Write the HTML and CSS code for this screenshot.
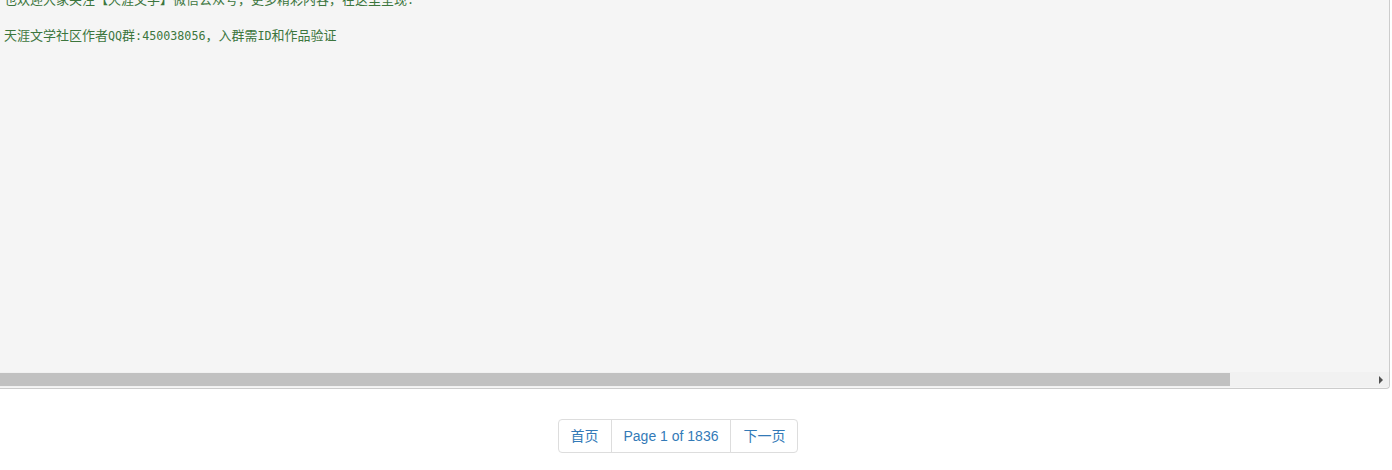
FILE: index.html
```html
<!DOCTYPE html>
<html lang="zh-CN">
<head>
<meta charset="utf-8">
<title>天涯文学</title>
<link rel="stylesheet" href="styles.css">
</head>
<body>
<div class="pre-box">
  <div class="pre-text">
    <div class="line">也欢迎大家关注【天涯文学】微信公众号，更多精彩内容，在这里呈现<span class="lat">.</span></div>
    <div class="line blank"></div>
    <div class="line">天涯文学社区作者<span class="lat">QQ</span>群<span class="lat">:450038056</span>，入群需<span class="lat">ID</span>和作品验证</div>
  </div>
  <div class="hscroll">
    <div class="thumb"></div>
    <div class="spacer"></div>
    <div class="arrow"></div>
  </div>
</div>
<div class="pager-wrap">
  <ul class="pagination">
    <li><a href="#">首页</a></li>
    <li><a href="#">Page 1 of 1836</a></li>
    <li><a href="#">下一页</a></li>
  </ul>
</div>
</body>
</html>
```
FILE: styles.css
```css
html, body {
  margin: 0;
  padding: 0;
  background: #ffffff;
  overflow: hidden;
}
body {
  width: 1392px;
  height: 470px;
}
.pre-box {
  width: 1389px;
  height: 388px;
  background: #f5f5f5;
  border-right: 1px solid #cccccc;
  border-bottom: 1px solid #cccccc;
  border-bottom-right-radius: 4px;
  display: flex;
  flex-direction: column;
  overflow: hidden;
}
.pre-text {
  flex: 1;
  margin-top: -9px;
  padding-left: 4px;
  font-family: "DejaVu Sans Mono", "Noto Sans CJK SC", monospace;
  font-size: 13px;
  line-height: 18px;
  color: #3c763d;
  white-space: nowrap;
}
.line {
  height: 18px;
}
.lat {
  font-family: "DejaVu Sans Mono", monospace;
  font-size: 11.7px;
}
.hscroll {
  height: 15px;
  margin-bottom: 1px;
  background: #f1f1f1;
  display: flex;
  align-items: center;
}
.thumb {
  width: 1230px;
  height: 13px;
  background: #c1c1c1;
}
.spacer {
  flex: 1;
}
.arrow {
  width: 0;
  height: 0;
  border-top: 4px solid transparent;
  border-bottom: 4px solid transparent;
  border-left: 4px solid #505050;
  margin-right: 6px;
}
.pager-wrap {
  display: flex;
  justify-content: center;
  padding-top: 30px;
  padding-right: 36px;
}
.pagination {
  display: flex;
  list-style: none;
  margin: 0;
  padding: 0;
  font-family: "Liberation Sans", "Noto Sans CJK SC", sans-serif;
  font-size: 14px;
  line-height: 20px;
}
.pagination li a {
  display: block;
  padding: 6px 12px;
  border: 1px solid #dddddd;
  margin-left: -1px;
  color: #337ab7;
  text-decoration: none;
  background: #ffffff;
}
.pagination li:first-child a {
  margin-left: 0;
  border-radius: 4px 0 0 4px;
}
.pagination li:last-child a {
  border-radius: 0 4px 4px 0;
}
```
